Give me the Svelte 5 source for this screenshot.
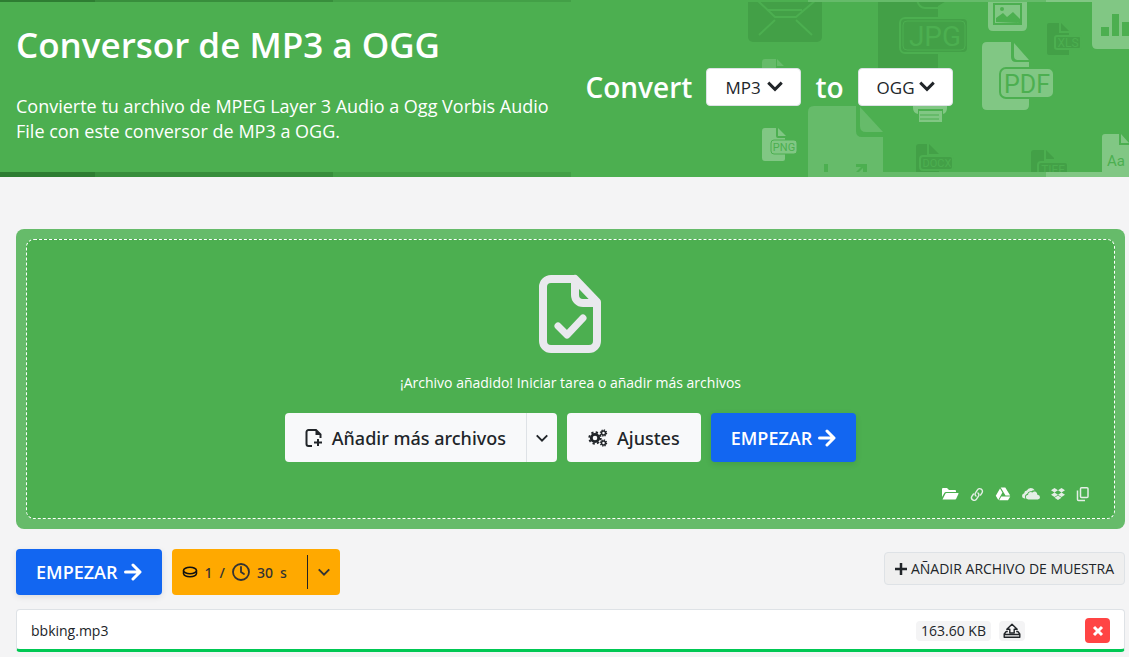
<script>
  const formats = ['MP3', 'OGG', 'WAV', 'FLAC'];
  let from = $state('MP3');
  let to = $state('OGG');
</script>

{#snippet chevron(size, weight)}
  <svg class="chevron" width={size} height={size} viewBox="0 0 16 16" aria-hidden="true">
    <path d="M2 5l6 6 6-6" fill="none" stroke="currentColor" stroke-width={weight} />
  </svg>
{/snippet}

{#snippet arrow()}
  <svg width="18" height="18" viewBox="0 0 18 18" aria-hidden="true">
    <path d="M1.5 9h14M9 2l7 7-7 7" fill="none" stroke="currentColor" stroke-width="3" stroke-linecap="round" stroke-linejoin="round" />
  </svg>
{/snippet}

<header>
  <svg class="art" width="389" height="177" viewBox="740 0 389 177" aria-hidden="true">
    <g fill="#43a047">
      <rect x="748" y="-20" width="74" height="62" rx="5" />
      <path d="M878 0h70l-10 6v62h-60z" />
      <path d="M1047 25q0-2 2-2h12l8 8v24h-20q-2 0-2-2z" />
      <path d="M916 147q0-3 3-3h10l10 10v20h-23z" />
      <path d="M1031 153q0-3 3-3h12l8 8v15h-23z" />
    </g>
    <g fill="none" stroke="#4caf50" stroke-width="2">
      <path d="M757 0l18 17h21l20-17M759 35l16-15M812 35l-16-15M768 10h34" />
      <path d="M917 0q2 8 8 8h14M1060 23v9h9M928 144v11h11M1045 150v10h9" />
    </g>
    <g fill="#43a047" stroke="#4caf50" stroke-width="2">
      <rect x="900" y="18" width="68" height="35" rx="5" />
      <rect x="1055" y="36" width="26" height="13" rx="2" />
      <rect x="920" y="156" width="33" height="14" rx="3" />
      <rect x="1038" y="162" width="30" height="14" rx="3" />
    </g>
    <rect x="903" y="21" width="62" height="29" rx="4" fill="none" stroke="#4caf50" />
    <g fill="#66bb6a">
      <path d="M808 112q0-6 6-6h42v25q0 6 6 6h21v40h-75z" />
      <path d="M860 107l23 25h-17q-6 0-6-6z" />
      <path d="M762 62q0-3 3-3h11v9h8v20h-22zM777 59l7 7h-7z" />
    </g>
    <path d="M824 164h4v8h-4zM856 164h11v8h-4v-4l-4 4h-3l5-5h-5z" fill="#4caf50" />
    <g fill="#81c784">
      <path d="M762 131q0-3 3-3h11v8q0 2 2 2h7v21q0 2-2 2h-18q-3 0-3-3zM778 128l8 8h-8z" />
      <rect x="771" y="140" width="26" height="14" rx="3" stroke="#4caf50" />
      <path d="M913 98h34v10q0 5-4 6v-5h-25v5q-5-1-5-6z" />
      <path d="M919 111h23v11h-23z" />
      <path d="M988 0h39v26q0 5-5 5h-29q-5 0-5-5z" />
      <path d="M982 47q0-5 5-5h24v15q0 5 5 5h13v43q0 5-5 5h-37q-5 0-5-5z" />
      <path d="M1014 43l15 17h-11q-4 0-4-4z" />
      <rect x="1000" y="68" width="54" height="30" rx="6" stroke="#4caf50" stroke-width="2" />
      <path d="M1092 0h38v49h-33q-5 0-5-5z" />
      <path d="M1102 137q0-3 3-3h14v11h10v28h-27zM1121 134l8 9h-8z" />
    </g>
    <g fill="none" stroke="#4caf50" stroke-width="2">
      <rect x="994" y="4" width="27" height="20" />
      <path d="M920 115h19M920 119h19" stroke-width="1" />
    </g>
    <path d="M996 22v-4l7-5 4 4 6-5 7 7v4zM1101 27h8v9h-8zM1112 14h7v22h-7zM1122 22h8v14h-8z" fill="#4caf50" />
    <circle cx="1002" cy="9" r="2" fill="#4caf50" />
    <g class="tag" text-anchor="middle">
      <text x="784" y="151" font-size="11">PNG</text>
      <text x="1027" y="93" font-size="25">PDF</text>
      <text x="1116" y="166" font-size="15">Aa</text>
      <text x="935" y="46" font-size="28">JPG</text>
      <text x="1068" y="47" font-size="12">XLS</text>
      <text x="937" y="167" font-size="11">DOCX</text>
      <text x="1053" y="174" font-size="12">TIFF</text>
    </g>
  </svg>

  <div class="stripe"><i></i><i></i><i></i><i></i><i></i><i></i></div>
  <div class="hero">
    <div class="intro">
      <h1>Conversor de MP3 a OGG</h1>
      <p>Convierte tu archivo de MPEG Layer 3 Audio a Ogg Vorbis Audio File con este conversor de MP3 a OGG.</p>
    </div>
    <form class="convert">
      <label for="from">Convert</label>
      <span class="pick">
        <select id="from" bind:value={from}>
          {#each formats as f}<option>{f}</option>{/each}
        </select>
        {@render chevron(18, 2.6)}
      </span>
      <label for="to">to</label>
      <span class="pick">
        <select id="to" bind:value={to}>
          {#each formats as f}<option>{f}</option>{/each}
        </select>
        {@render chevron(18, 2.6)}
      </span>
    </form>
  </div>
  <div class="stripe thick"><i></i><i></i><i></i><i></i><i></i><i></i></div>
</header>

<main>
  <section class="drop">
    <div class="zone">
      <svg class="file" width="64" height="80" viewBox="0 0 64 80" aria-hidden="true">
        <path d="M36 5H12a8 8 0 0 0-8 8v54a8 8 0 0 0 8 8h38a8 8 0 0 0 8-8V28L36 5v16a8 8 0 0 0 8 8h14" fill="none" stroke="#e9e9ee" stroke-width="8" stroke-linejoin="round" />
        <path d="M19 52l9 9 16-17" fill="none" stroke="#e9e9ee" stroke-width="7" stroke-linecap="round" stroke-linejoin="round" />
      </svg>
      <p>¡Archivo añadido! Iniciar tarea o añadir más archivos</p>
      <div class="actions">
        <div class="split">
          <button class="light add" type="button">
            <svg width="18" height="20" viewBox="0 0 18 20" aria-hidden="true">
              <path d="M7 18H3.500a2 2 0 0 1-2-2V4a2 2 0 0 1 2-2H11l4.500 4.500V10" fill="none" stroke="currentColor" stroke-width="2" />
              <path d="M10.500 1.500V7H16zM12 11h2v7h-2z" fill="currentColor" />
              <path d="M9 13.500h8v2H9z" fill="currentColor" />
            </svg>
            Añadir más archivos
          </button>
          <button class="light more" type="button" aria-label="Más opciones">{@render chevron(14, 2.2)}</button>
        </div>
        <button class="light settings" type="button">
          <svg width="20" height="18" viewBox="0 0 20 18" fill="none" stroke="currentColor" aria-hidden="true">
            <circle cx="7" cy="9" r="3.700" stroke-width="2.800" />
            <circle cx="7" cy="9" r="5.700" stroke-width="2" stroke-dasharray="2.240 2.240" />
            <circle cx="15.500" cy="4" r="2" stroke-width="1.500" />
            <circle cx="15.500" cy="4" r="3" stroke-width="1.400" stroke-dasharray="1.200 1.150" />
            <circle cx="15.500" cy="14" r="2" stroke-width="1.500" />
            <circle cx="15.500" cy="14" r="3" stroke-width="1.400" stroke-dasharray="1.200 1.150" />
          </svg>
          Ajustes
        </button>
        <button class="start tall" type="button">EMPEZAR {@render arrow()}</button>
      </div>
      <div class="sources">
        <button type="button" aria-label="Carpeta">
          <svg width="18" height="16" viewBox="0 0 18 16" aria-hidden="true">
            <path d="M1 11V3q0-1 1-1h4l2 2h6q1 0 1 1v1H5q-1.200 0-1.700 1zM1.500 13.500l3-6Q4.800 7 5.500 7H17q.8 0 .5.800l-2.300 5q-.3.700-1 .700z" fill="currentColor" />
          </svg>
        </button>
        <button type="button" aria-label="Enlace">
          <svg width="14" height="16" viewBox="0 0 14 16" fill="none" stroke="#e4eee6" stroke-width="1.400" stroke-linecap="round" aria-hidden="true">
            <path d="M6 10a2.600 2.600 0 0 1-.5-3.200l2-3a2.700 2.700 0 0 1 4.500 3l-1.500 2.300M8 7a2.600 2.600 0 0 1 .5 3.200l-2 3a2.700 2.700 0 0 1-4.500-3L3.500 8" />
          </svg>
        </button>
        <button type="button" aria-label="Google Drive">
          <svg width="16" height="16" viewBox="0 0 16 16" fill="currentColor" aria-hidden="true">
            <path d="M5.700 1.500h4.600l4.900 8h-4.700zM5 2.500L7.400 6.400 3.300 14 .8 9.800zM6.300 10.400h9L13 14.300H4.200z" />
          </svg>
        </button>
        <button type="button" aria-label="OneDrive">
          <svg width="18" height="16" viewBox="0 0 18 16" fill="#e4eee6" aria-hidden="true">
            <path d="M3.400 12.500H2.500Q0 12.300 0 10 0 7.700 2.200 7.300 2.300 4.800 4.800 4.500 6 2 8.700 2q2.500 0 4 2.300-2-.3-3.300.9Q6 4.700 5.200 7.800 2.700 8.500 2.900 11z" />
            <path d="M6.300 13.500q-2.500-.3-2.500-2.400 0-2.200 2.300-2.400.2-2.700 2.700-2.700.9 0 1.600.5Q11.700 5 13.300 5.500q2 .7 2.100 3.200 2.600.3 2.600 2.500 0 2.100-2.200 2.300z" />
          </svg>
        </button>
        <button type="button" aria-label="Dropbox">
          <svg width="14" height="16" viewBox="0 0 14 16" fill="#e4eee6" aria-hidden="true">
            <path d="M3.500 2L7 4.200 3.500 6.400 0 4.200zM10.500 2L14 4.200l-3.500 2.200L7 4.200zM3.500 6.600L7 8.800 3.500 11 0 8.800zM10.500 6.600L14 8.800 10.500 11 7 8.800zM3.500 11.800L7 9.600l3.500 2.200L7 14z" />
          </svg>
        </button>
        <button type="button" aria-label="Portapapeles">
          <svg width="14" height="16" viewBox="0 0 14 16" fill="none" stroke="#e4eee6" stroke-width="1.500" aria-hidden="true">
            <rect x="4.500" y="1.800" width="7.500" height="9.700" rx="1" />
            <path d="M1.500 4.500v9q0 1 1 1H9" />
          </svg>
        </button>
      </div>
    </div>
  </section>

  <div class="bar">
    <button class="start" type="button">EMPEZAR {@render arrow()}</button>
    <button class="cost" type="button">
      <svg width="16" height="12" viewBox="0 0 16 12" fill="none" stroke="#111" stroke-width="1.500" aria-hidden="true">
        <ellipse cx="8" cy="4.500" rx="6.500" ry="3.200" />
        <path d="M1.500 4.500v3q.8 3.200 6.500 3.200t6.500-3.200v-3" />
      </svg>
      <span>1</span><span>/</span>
      <svg width="18" height="18" viewBox="0 0 18 18" fill="none" stroke="currentColor" stroke-width="1.800" stroke-linecap="round" aria-hidden="true">
        <circle cx="9" cy="9" r="8" /><path d="M9 4v5l3 2" />
      </svg>
      <span>30</span><span>s</span>
      <span class="toggle">{@render chevron(14, 2.2)}</span>
    </button>
    <button class="sample" type="button">
      <svg width="12" height="12" viewBox="0 0 12 12" aria-hidden="true"><path d="M6 0v12M0 6h12" stroke="currentColor" stroke-width="2.500" /></svg>
      AÑADIR ARCHIVO DE MUESTRA
    </button>
  </div>

  <div class="row">
    <span class="name">bbking.mp3</span>
    <span class="chip">163.60 KB</span>
    <button class="chip up" type="button" aria-label="Subir">
      <svg width="18" height="16" viewBox="0 0 18 16" fill="none" stroke="currentColor" stroke-width="1.400" stroke-linejoin="round" aria-hidden="true">
        <path d="M9 1.200L3.800 6.300h3V10h4.400V6.300h3z" />
        <path d="M4.800 8.500H3.200L1.200 11v3.200h15.600V11l-2-2.500h-1.600M1.200 11.500h15.600" />
      </svg>
    </button>
    <button class="remove" type="button" aria-label="Quitar">
      <svg width="12" height="12" viewBox="0 0 12 12" aria-hidden="true"><path d="M2 2l8 8M10 2l-8 8" stroke="#fff" stroke-width="3" /></svg>
    </button>
  </div>
</main>

<style>
  :global(body) {
    margin: 0;
    background: #f4f4f5;
    color: #212529;
    font-family: 'Open Sans', 'Noto Sans', sans-serif;
    overflow-x: hidden;
  }
  button, select { font: inherit; color: inherit; border: 0; margin: 0; cursor: pointer; }
  button { display: inline-flex; align-items: center; justify-content: center; }
  svg { display: block; flex: none; }

  header { position: relative; background: #4caf50; color: #fff; overflow: hidden; }
  .art { position: absolute; top: 0; right: 0; }
  .tag text { font-family: Roboto, sans-serif; fill: #4caf50; }
  .stripe {
    position: relative;
    display: grid;
    grid-template-columns: 95px 238px 238px 237px 238px 1fr;
    height: 2px;
  }
  .thick { height: 5px; }
  .stripe i:nth-child(1) { background: #2e7d32; }
  .stripe i:nth-child(2) { background: #388e3c; }
  .stripe i:nth-child(3) { background: #43a047; }
  .stripe i:nth-child(4) { background: #4caf50; }
  .stripe i:nth-child(5) { background: #66bb6a; }
  .stripe i:nth-child(6) { background: #81c784; }

  .hero {
    position: relative;
    display: grid;
    grid-template-columns: 1fr 1fr;
    column-gap: 32px;
    padding: 20px 6px 28px 16px;
  }
  h1 { margin: 0 0 27px; font-size: 35px; line-height: 45px; font-weight: 600; }
  .intro p { margin: 0; font-size: 18px; line-height: 25px; }
  .convert { display: flex; align-items: center; align-self: center; gap: 14px; margin-top: 8px; }
  .convert label { font-size: 28px; line-height: 38px; font-weight: 600; }
  .pick { position: relative; display: flex; color: #212529; }
  .pick select {
    appearance: none;
    width: 95px;
    height: 38px;
    padding: 0 32px 0 18px;
    border: 1px solid #dee2e6;
    border-radius: 4px;
    background: #fff;
    font-size: 17px;
  }
  .pick :global(.chevron) { position: absolute; right: 17px; top: 9px; pointer-events: none; }

  main { padding: 52px 4px 0 16px; }
  .drop { padding: 10px; border-radius: 8px; background: #66bb6a; }
  .zone {
    display: flex;
    flex-direction: column;
    align-items: center;
    padding: 34px 24px 16px;
    border: 1px dashed #fff;
    border-radius: 8px;
    background: #4caf50;
    color: #fff;
  }
  .zone p { margin: 19px 0 20px; font-size: 14px; line-height: 20px; }
  .actions { display: flex; gap: 10px; }
  .split { display: flex; }
  .actions button { height: 49px; border-radius: 4px; }
  .light { gap: 9px; background: #f8f9fa; color: #212529; font-family: 'Noto Sans', 'Open Sans', sans-serif; font-size: 18px; font-weight: 500; }
  .actions .add { padding: 0 20px; border-radius: 4px 0 0 4px; }
  .actions .more { width: 31px; padding: 0; border-left: 1px solid #dee2e6; border-radius: 0 4px 4px 0; }
  .settings { padding: 0 21px; }
  .start {
    gap: 6px;
    height: 46px;
    padding: 0 20px;
    border-radius: 4px;
    background: #1266f1;
    color: #fff;
    font-size: 18px;
    font-weight: 600;
    box-shadow: 0 2px 6px rgb(0 0 0 / 10%);
  }
  .sources { display: flex; align-self: stretch; justify-content: flex-end; align-items: center; gap: 11px; margin-top: 24px; }
  .sources button { padding: 0; background: none; }

  .bar { display: flex; align-items: center; gap: 10px; margin-top: 20px; }
  .cost {
    gap: 7px;
    height: 46px;
    padding: 0 9px 0 10px;
    border-radius: 4px;
    background: #ffa900;
    color: #333;
    font-family: 'Noto Sans', 'Open Sans', sans-serif;
    font-size: 14px;
    font-weight: 500;
  }
  .toggle { display: flex; align-items: center; height: 34px; margin-left: 13px; padding-left: 9px; border-left: 1px solid #222; }
  .sample {
    gap: 4px;
    height: 33px;
    margin-left: auto;
    margin-bottom: 7px;
    padding: 0 10px;
    border: 1px solid #dee2e6;
    border-radius: 4px;
    background: #efefef;
    font-size: 14px;
  }
  .row {
    display: flex;
    align-items: center;
    gap: 8px;
    margin-top: 14px;
    padding: 8px 14px 6px;
    border: 1px solid #dee2e6;
    border-bottom: 3px solid #00c853;
    border-radius: 4px;
    background: #fff;
    font-size: 14px;
  }
  .name { flex: 1; }
  .chip { height: 20px; padding: 0 5px; border-radius: 4px; background: #f4f4f5; line-height: 20px; }
  .up { padding: 0 4px; margin-right: 52px; }
  .remove { width: 25px; height: 25px; padding: 0; border-radius: 4px; background: #ff4444; }
</style>
